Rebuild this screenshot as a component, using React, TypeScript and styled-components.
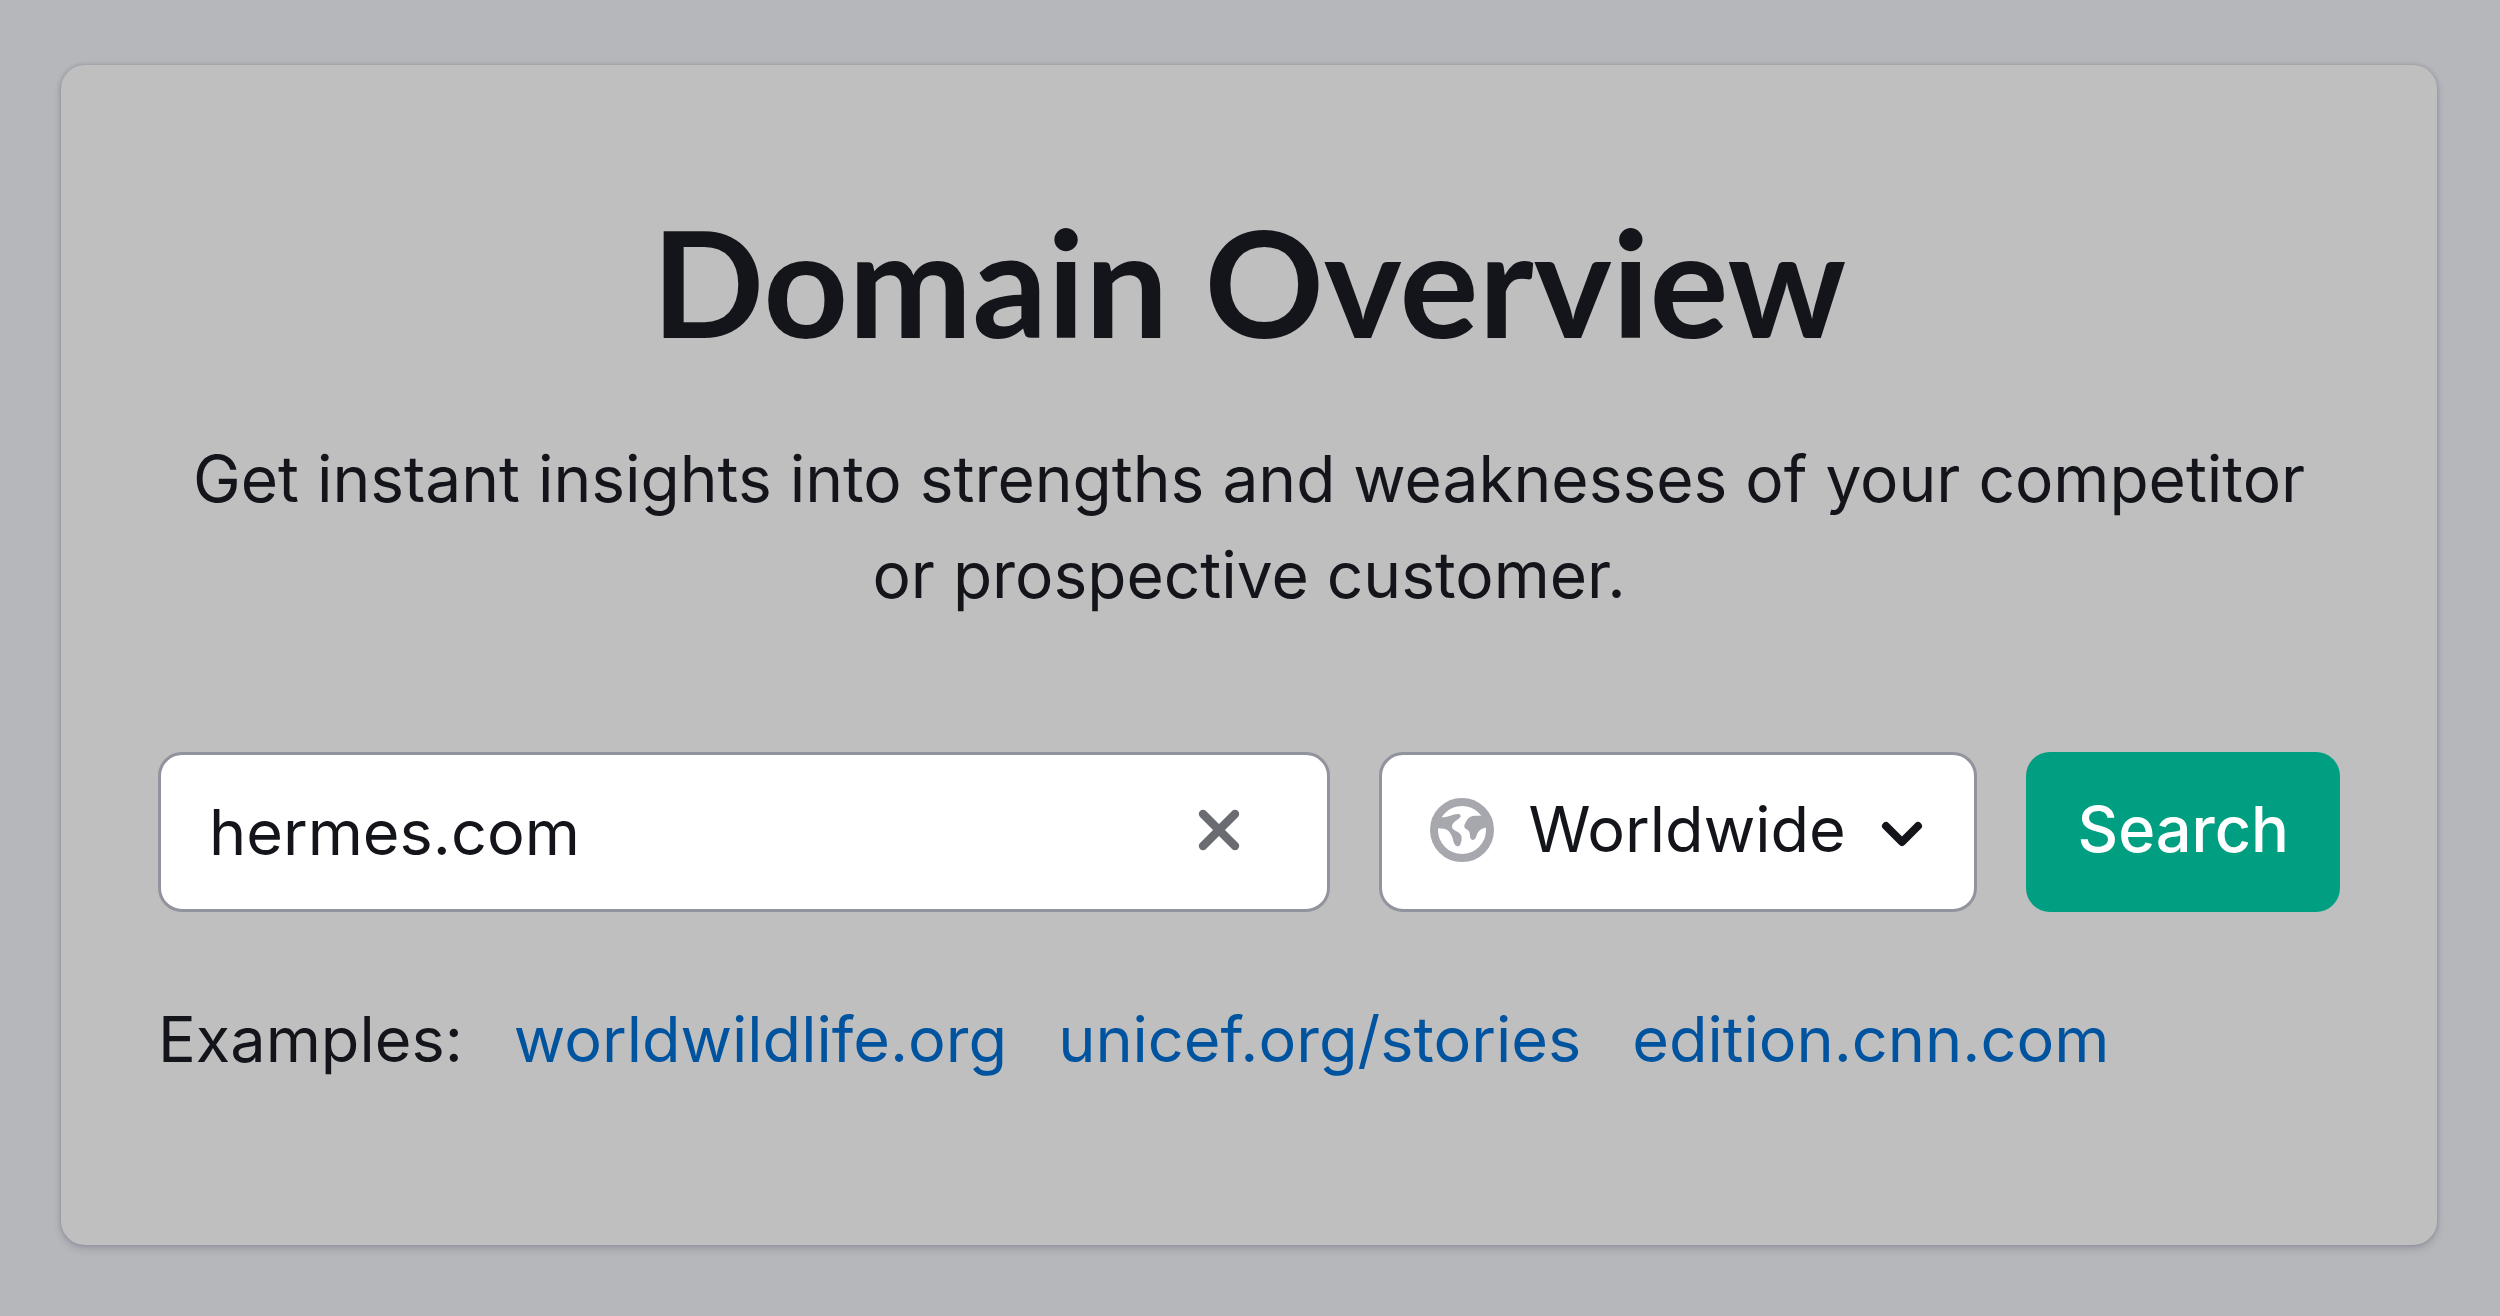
import React, { useState } from "react";
import styled, { createGlobalStyle } from "styled-components";

const GlobalStyle = createGlobalStyle`
  *, *::before, *::after {
    box-sizing: border-box;
  }
  body {
    margin: 0;
    background: #b6b7bb;
    color: #13151b;
    font-family: Inter, "Liberation Sans", sans-serif;
    font-size: 63px;
    line-height: 96px;
  }
`;

const Page = styled.main`
  padding: 65px 63px 65px 61px;
`;

const Card = styled.section`
  display: flex;
  flex-direction: column;
  padding: 136px 97px 158px;
  border-radius: 24px;
  background: #bfbfbf;
  box-shadow: 0 0 4px rgba(25, 27, 60, 0.2), 0 4px 8px rgba(25, 27, 60, 0.16);
`;

const Title = styled.h1`
  margin: 0 0 70px;
  font-family: Lato, Inter, sans-serif;
  font-size: 148px;
  font-weight: 700;
  line-height: 160px;
  text-align: center;
`;

const Lead = styled.p`
  margin: 0 0 129px;
  font-size: 64px;
  text-align: center;
`;

const SearchForm = styled.form`
  display: flex;
  gap: 49px;
  margin-bottom: 79px;
`;

const Field = styled.div<{ $grow?: boolean }>`
  display: flex;
  align-items: center;
  flex: ${(p) => (p.$grow ? "1 1 0" : "0 0 auto")};
  min-width: 0;
  height: 160px;
  padding: 0 40px 4px 48px;
  border: 3px solid #91939d;
  border-radius: 24px;
  background: #fff;
`;

const DomainInput = styled.input`
  flex: 1;
  min-width: 0;
  padding: 4px 0 0;
  border: 0;
  outline: 0;
  background: none;
  color: inherit;
  font: inherit;
`;

const ClearButton = styled.button`
  display: flex;
  padding: 0 36px 0 0;
  border: 0;
  background: none;
  color: #6b6c71;
  cursor: pointer;
`;

const RegionSelect = styled.select`
  appearance: none;
  margin: 0 24px 0 34px;
  padding: 0 0 2px;
  border: 0;
  outline: 0;
  background: none;
  color: inherit;
  font: inherit;
  cursor: pointer;
`;

const Icon = styled.svg<{ $color?: string }>`
  display: block;
  flex: none;
  width: 64px;
  height: 64px;
  color: ${(p) => p.$color ?? "currentColor"};
`;

const SearchButton = styled.button`
  flex: none;
  height: 160px;
  padding: 0 51px 6px;
  border: 0;
  border-radius: 24px;
  background: #009f81;
  color: #fff;
  font: inherit;
  font-weight: 500;
  cursor: pointer;
`;

const Examples = styled.div`
  display: flex;
  flex-wrap: wrap;
  column-gap: 51px;
`;

const ExampleLink = styled.a`
  color: #00539f;
  text-decoration: none;
`;

const examples = ["worldwildlife.org", "unicef.org/stories", "edition.cnn.com"];

const CloseIcon = () => (
  <Icon viewBox="0 0 16 16" aria-hidden="true">
    <path d="M4 4l8 8M12 4l-8 8" fill="none" stroke="currentColor" strokeWidth="2.1" strokeLinecap="round" />
  </Icon>
);

const GlobeIcon = () => (
  <Icon viewBox="0 0 16 16" $color="#a7a8ad" aria-hidden="true">
    <circle cx="8" cy="8" r="7" fill="none" stroke="currentColor" strokeWidth="2" />
    <path
      fill="currentColor"
      d="M1.6 4.8H3.6C4.8 4.6 5.8 4.1 6.8 4C7.6 3.9 7.9 4.4 7.5 4.9C7.1 5.4 6.6 5.5 6.1 6C5.4 6.6 5.3 7.4 5.9 7.9C6.5 8.4 7.5 8.6 7.8 9.4C8.1 10.2 7.8 11 7.6 11.6C7.3 12.2 6.6 12.2 6.2 11.6C5.7 10.9 5.8 10.2 5.4 9.4C5 8.6 4.4 7.8 3.4 7.7L1.4 7.5Z"
    />
    <path
      fill="currentColor"
      d="M13 4.4C12 4.5 10.9 4.4 10.1 4.7C9.4 5 9.2 5.7 8.8 6.3C8.4 6.9 8.5 7.5 9.1 7.8C9.8 8.1 10 8.7 10 9.4C10 10 10.2 10.5 10.7 10.5C11.4 10.4 11.5 9.7 11.8 9C12.2 8.1 12.9 7.5 14.4 7.3L14 4.6Z"
    />
  </Icon>
);

const ChevronIcon = () => (
  <Icon viewBox="0 0 16 16" aria-hidden="true">
    <path d="M4 7l4 4 4-4" fill="none" stroke="currentColor" strokeWidth="2" strokeLinecap="round" strokeLinejoin="round" />
  </Icon>
);

export default function App() {
  const [domain, setDomain] = useState("hermes.com");

  return (
    <>
      <GlobalStyle />
      <Page>
        <Card>
          <Title>Domain Overview</Title>
          <Lead>
            Get instant insights into strengths and weaknesses of your competitor
            <br />
            or prospective customer.
          </Lead>
          <SearchForm onSubmit={(e) => e.preventDefault()}>
            <Field $grow>
              <DomainInput
                type="text"
                aria-label="Domain"
                spellCheck={false}
                value={domain}
                onChange={(e) => setDomain(e.target.value)}
              />
              <ClearButton type="button" aria-label="Clear" onClick={() => setDomain("")}>
                <CloseIcon />
              </ClearButton>
            </Field>
            <Field>
              <GlobeIcon />
              <RegionSelect aria-label="Region" defaultValue="Worldwide">
                <option>Worldwide</option>
              </RegionSelect>
              <ChevronIcon />
            </Field>
            <SearchButton type="submit">Search</SearchButton>
          </SearchForm>
          <Examples>
            <span>Examples:</span>
            {examples.map((name) => (
              <ExampleLink key={name} href={"#" + name}>
                {name}
              </ExampleLink>
            ))}
          </Examples>
        </Card>
      </Page>
    </>
  );
}
